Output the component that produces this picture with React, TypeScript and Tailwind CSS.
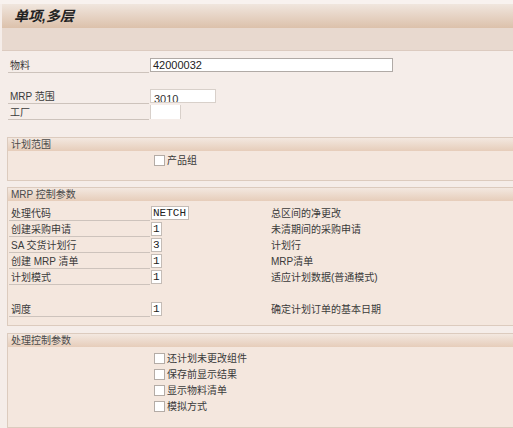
import type { ReactNode } from 'react';

const FONT = { fontFamily: '"Liberation Sans", "Noto Sans CJK SC", sans-serif' };
const MONO = { fontFamily: '"Liberation Mono", "Noto Sans CJK SC", monospace' };

const Checkbox = ({ label }: { label: string }) => (
  <div className="flex h-[16px] items-center pl-[146px]">
    <span className="h-[11px] w-[11px] border border-[#b4aca6] bg-white" />
    <span className="ml-[2px] text-[10px] text-[#3a3a3a]">{label}</span>
  </div>
);

const Label = ({ children }: { children: ReactNode }) => (
  <div className="ml-[8px] flex h-full w-[141px] items-end border-b border-[#cdc3bc] pb-[1px] pl-[2px] text-[10px] leading-none text-[#3a3a3a]">
    {children}
  </div>
);

const Section = ({ title, children }: { title: string; children: ReactNode }) => (
  <div className="ml-[7px] border-y border-l border-[#dccbbe] bg-[#f4e7de]">
    <div className="flex h-[13px] items-center bg-gradient-to-b from-[#f3e8e0] to-[#e6cdba] pl-[3px] text-[10px] text-[#4a4a4a]">
      {title}
    </div>
    {children}
  </div>
);

const ParamRow = ({ label, value, desc, wide }: { label: string; value: string; desc: string; wide?: boolean }) => (
  <div className="flex h-[16px] items-stretch">
    <div className="-ml-[7px] flex">
      <Label>{label}</Label>
    </div>
    <div className="ml-[1px] flex w-[120px] items-center">
      <div
        className={`flex h-[14px] items-center border border-[#c4bcb6] bg-white pl-[1px] text-[11px] text-[#222] ${wide ? 'w-[38px]' : 'w-[11px]'}`}
        style={MONO}
      >
        {value}
      </div>
    </div>
    <div className="flex items-center text-[10px] text-[#3a3a3a]">{desc}</div>
  </div>
);

export default function App() {
  return (
    <div className="h-[428px] w-[513px] overflow-hidden bg-[#f5ede9]" style={FONT}>
      <div className="h-[4px] bg-[#f8f2ef]" />
      <div className="ml-[2px] flex h-[24px] items-center bg-gradient-to-b from-[#f0e6de] to-[#dcc1ab] pl-[12px] text-[14px] font-bold italic text-[#222]">
        单项,多层
      </div>
      <div className="ml-[2px] h-[23px] border-b border-[#dccbc0] bg-[#e8d9cf]" />

      <div className="mt-[7px] flex h-[15px]">
        <Label>物料</Label>
        <div className="ml-[1px] flex h-[14px] w-[243px] items-center border border-[#b0aaa6] bg-white pl-[2px] text-[11px] text-[#222]">
          42000032
        </div>
      </div>
      <div className="mt-[16px] flex h-[15px]">
        <Label>MRP 范围</Label>
        <div className="ml-[1px] h-[14px] w-[66px] overflow-hidden border border-[#d8d0ca] bg-white pl-[3px] pt-[4px] text-[11px] leading-none text-[#333]">
          3010
        </div>
      </div>
      <div className="mt-[1px] flex h-[15px]">
        <Label>工厂</Label>
        <div className="ml-[1px] h-[14px] w-[31px] border-x border-[#d8d0ca] bg-white" />
      </div>

      <div className="mt-[17px]">
        <Section title="计划范围">
          <div className="pb-[12px] pt-[1px]">
            <Checkbox label="产品组" />
          </div>
        </Section>
      </div>

      <div className="mt-[6px]">
        <Section title="MRP 控制参数">
          <div className="pb-[8px] pt-[4px]">
            <ParamRow label="处理代码" value="NETCH" desc="总区间的净更改" wide />
            <ParamRow label="创建采购申请" value="1" desc="未清期间的采购申请" />
            <ParamRow label="SA 交货计划行" value="3" desc="计划行" />
            <ParamRow label="创建 MRP 清单" value="1" desc="MRP清单" />
            <ParamRow label="计划模式" value="1" desc="适应计划数据(普通模式)" />
            <div className="mt-[16px]">
              <ParamRow label="调度" value="1" desc="确定计划订单的基本日期" />
            </div>
          </div>
        </Section>
      </div>

      <div className="mt-[7px]">
        <Section title="处理控制参数">
          <div className="pb-[13px] pt-[3px]">
            <Checkbox label="还计划未更改组件" />
            <Checkbox label="保存前显示结果" />
            <Checkbox label="显示物料清单" />
            <Checkbox label="模拟方式" />
          </div>
        </Section>
      </div>
    </div>
  );
}
